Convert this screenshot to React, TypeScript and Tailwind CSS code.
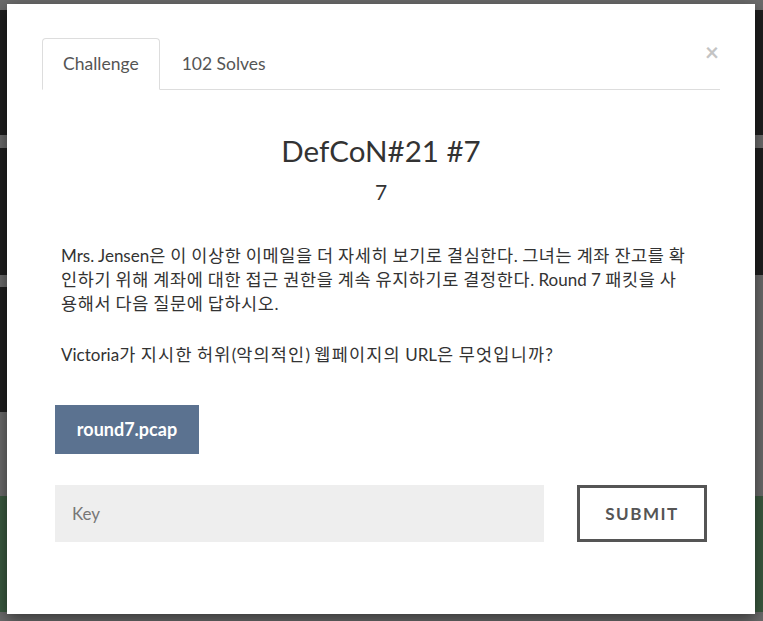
import React from 'react'

const font = { fontFamily: 'Lato, "Noto Sans CJK KR", sans-serif' }

function Ko({ text, wide }: { text: string; wide?: boolean }) {
  const parts = text.split(/([\uAC00-\uD7A3]+)/)
  return (
    <>
      {parts.map((p, i) =>
        /[\uAC00-\uD7A3]/.test(p) ? (
          <span key={i} className={wide ? 'text-[17.5px] tracking-[1.2px]' : 'text-[17.5px] tracking-[0.6px]'}>{p}</span>
        ) : (
          <React.Fragment key={i}>{p}</React.Fragment>
        )
      )}
    </>
  )
}

function Card({ tone }: { tone: 'dark' | 'green' | 'none' }) {
  const bg = tone === 'dark' ? 'bg-[#1f1f1f]' : tone === 'green' ? 'bg-[#3b5a40]' : 'bg-transparent'
  return <div className={`w-[226px] shrink-0 h-full ${bg}`} />
}

export default function App() {
  const rows: { h: string; cards: ('dark' | 'green' | 'none')[]; mb: string }[] = [
    { h: 'h-[125px]', cards: ['dark', 'dark', 'dark', 'dark'], mb: 'mb-[13px]' },
    { h: 'h-[127px]', cards: ['dark', 'dark', 'dark', 'dark'], mb: 'mb-[12px]' },
    { h: 'h-[125px]', cards: ['dark', 'dark', 'dark', 'none'], mb: 'mb-[84px]' },
    { h: 'h-[116px]', cards: ['green', 'green', 'green', 'green'], mb: 'mb-0' },
  ]

  return (
    <div className="relative w-[763px] h-[621px] overflow-hidden bg-[#6b6b6b]" style={font}>
      {/* dimmed board behind the modal */}
      <div className="flex flex-col pt-[10px] ml-[-89px]">
        {rows.map((r, i) => (
          <div key={i} className={`flex gap-[12px] ${r.h} ${r.mb}`}>
            {r.cards.map((c, j) => <Card key={j} tone={c} />)}
          </div>
        ))}
      </div>

      {/* modal */}
      <div className="absolute left-[7px] top-[4px] w-[748px] h-[610px] bg-white shadow-[0_5px_15px_rgba(0,0,0,0.5)] px-[35px] pt-[34px]">
        <button className="absolute right-[36px] top-[36px] text-[24px] font-bold leading-none text-[#c4c4c4]">×</button>

        {/* tabs */}
        <div className="flex border-b border-[#dddddd] h-[52px]">
          <div className="h-[52px] px-[20px] flex items-center border border-[#dddddd] border-b-white rounded-t-[4px] bg-white text-[17.5px] text-[#555555] -mb-px">
            Challenge
          </div>
          <div className="h-[52px] px-[20px] ml-[2px] flex items-center text-[17.5px] text-[#555555]">
            102 Solves
          </div>
        </div>

        {/* header */}
        <div className="flex flex-col items-center mt-[43px]">
          <h1 className="text-[29.5px] leading-[36px] text-[#333333]">DefCoN#21 #7</h1>
          <div className="text-[21px] leading-[28px] text-[#333333] mt-[9px]">7</div>
        </div>

        {/* description */}
        <div className="mx-[13px] mt-[38px] pl-[6px] text-[17px] leading-[24px] text-[#333333]">
          <p className="mb-[27px] whitespace-nowrap">
            <Ko text="Mrs. Jensen은 이 이상한 이메일을 더 자세히 보기로 결심한다. 그녀는 계좌 잔고를 확" /><br />
            <Ko text="인하기 위해 계좌에 대한 접근 권한을 계속 유지하기로 결정한다. Round 7 패킷을 사" /><br />
            <Ko text="용해서 다음 질문에 답하시오." />
          </p>
          <p className="whitespace-nowrap">
            <Ko wide text="Victoria가 지시한 허위(악의적인) 웹페이지의 URL은 무엇입니까?" />
          </p>
        </div>

        {/* file */}
        <div className="mx-[13px] mt-[38px]">
          <button className="w-[144px] h-[49px] bg-[#5b7290] text-white font-bold text-[18px]">round7.pcap</button>
        </div>

        {/* submit row */}
        <div className="mx-[13px] mt-[31px] flex justify-between">
          <input
            placeholder="Key"
            className="w-[489px] h-[57px] bg-[#eeeeee] px-[17px] text-[17px] text-[#555555] placeholder:text-[#777777] outline-none"
            style={font}
          />
          <button className="w-[130px] h-[57px] border-[3px] border-[#555555] text-[#555555] font-bold text-[17px] tracking-[1.5px]">
            SUBMIT
          </button>
        </div>
      </div>
    </div>
  )
}
